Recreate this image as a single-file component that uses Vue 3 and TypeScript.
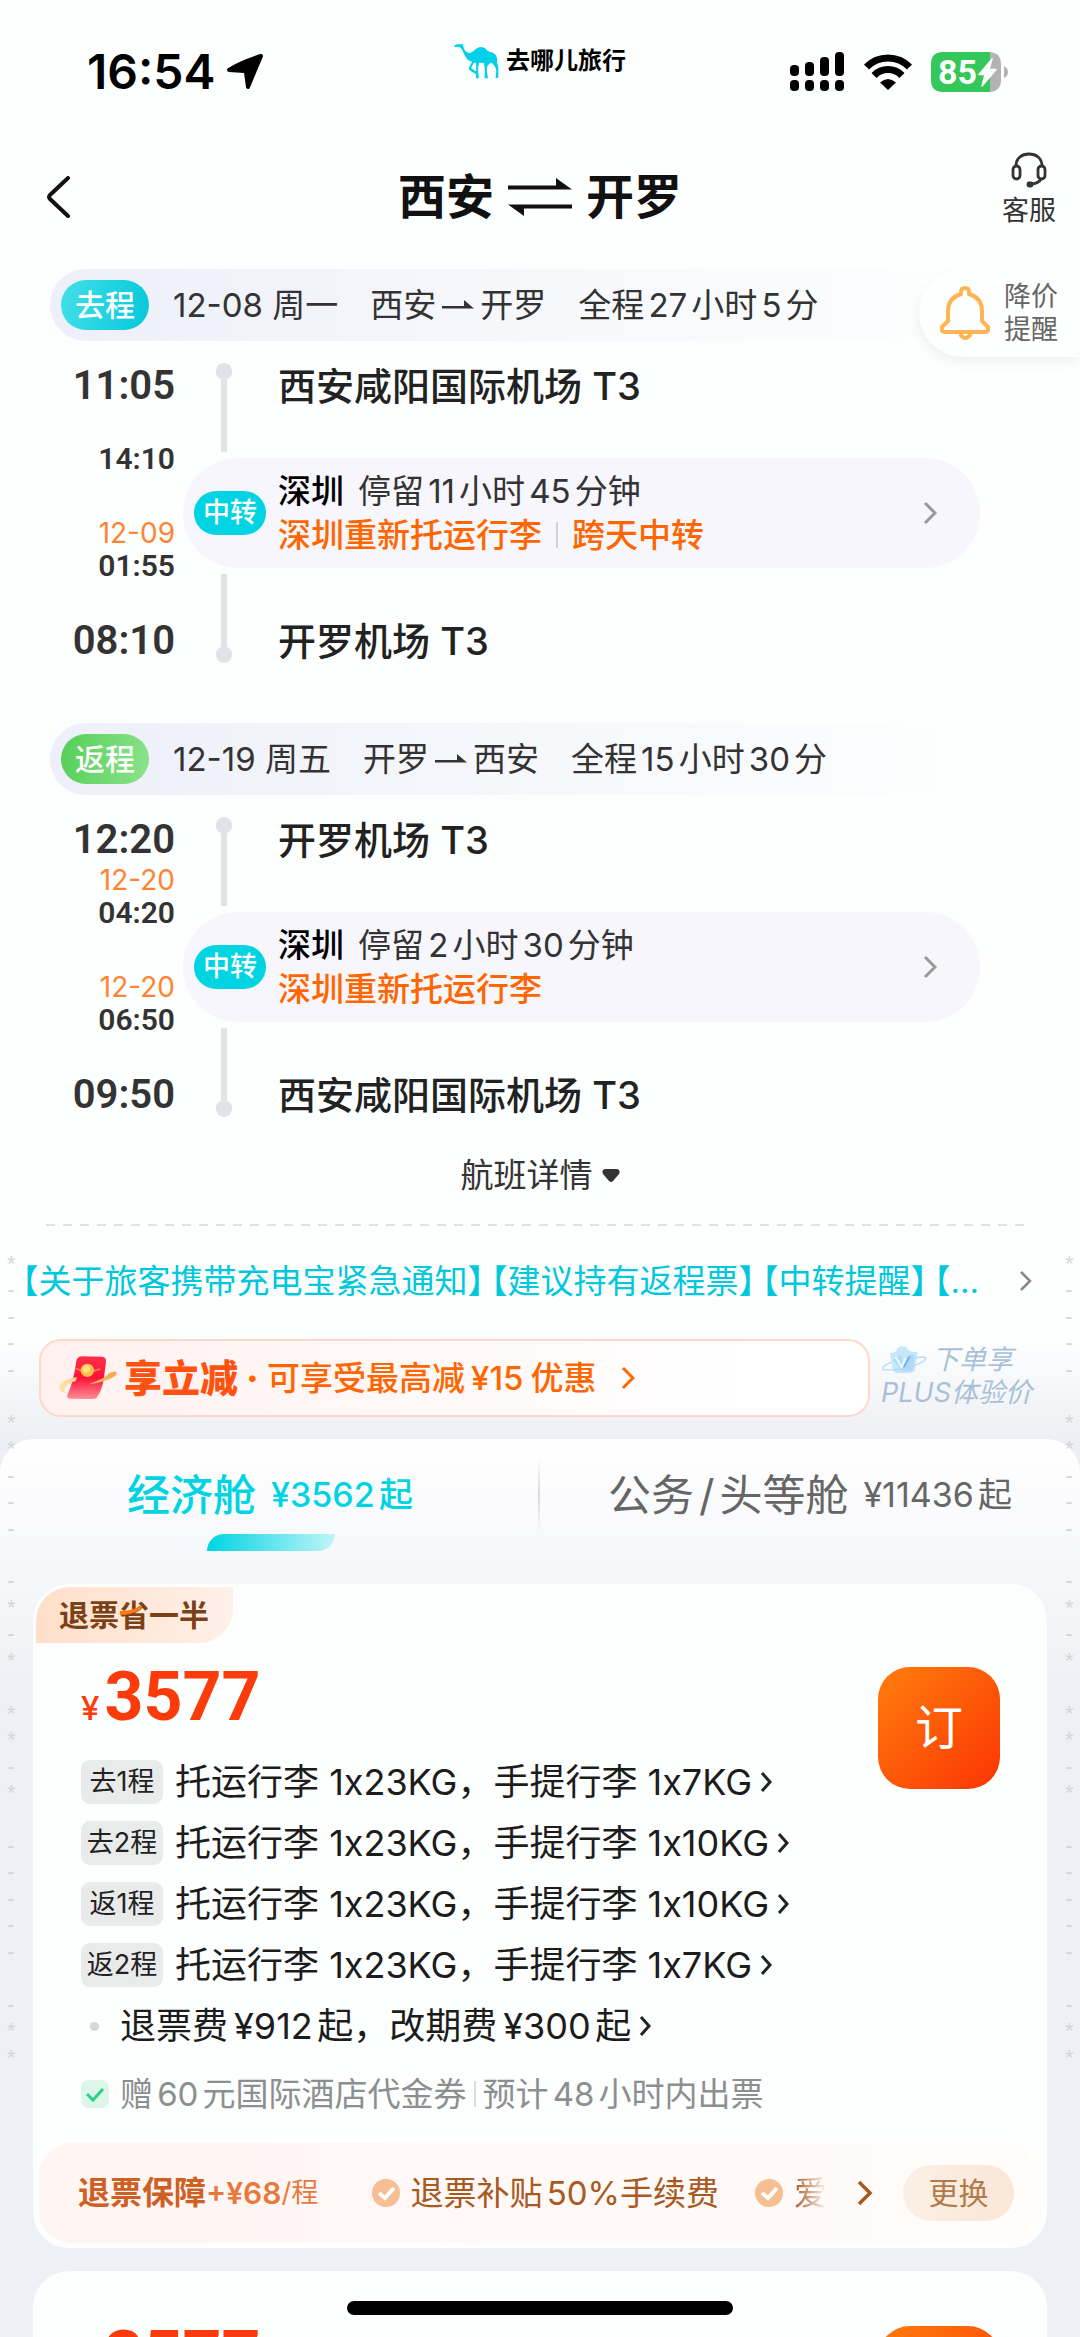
<script setup lang="ts">
interface Stop {
  time: string
  date?: string
}

interface Leg {
  kind: 'out' | 'back'
  label: string
  day: string
  from: string
  to: string
  total: string
  depart: Stop
  stopIn: Stop
  stopOut: Stop
  arrive: Stop
  origin: string
  target: string
  city: string
  stay: string
  notes: string[]
}

interface Fare {
  id: number
  tag?: string[]
  price: string
  bags: { leg: string; text: string }[]
  full: boolean
}

const legs: Leg[] = [
  {
    kind: 'out',
    label: '去程',
    day: '12-08 周一',
    from: '西安',
    to: '开罗',
    total: '全程27小时5分',
    depart: { time: '11:05' },
    stopIn: { time: '14:10' },
    stopOut: { time: '01:55', date: '12-09' },
    arrive: { time: '08:10' },
    origin: '西安咸阳国际机场 T3',
    target: '开罗机场 T3',
    city: '深圳',
    stay: '停留11小时45分钟',
    notes: ['深圳重新托运行李', '跨天中转'],
  },
  {
    kind: 'back',
    label: '返程',
    day: '12-19 周五',
    from: '开罗',
    to: '西安',
    total: '全程15小时30分',
    depart: { time: '12:20' },
    stopIn: { time: '04:20', date: '12-20' },
    stopOut: { time: '06:50', date: '12-20' },
    arrive: { time: '09:50' },
    origin: '开罗机场 T3',
    target: '西安咸阳国际机场 T3',
    city: '深圳',
    stay: '停留2小时30分钟',
    notes: ['深圳重新托运行李'],
  },
]

const notices = ['【关于旅客携带充电宝紧急通知】', '【建议持有返程票】', '【中转提醒】', '【...']

const fares: Fare[] = [
  {
    id: 1,
    tag: ['退票', '省', '一半'],
    price: '3577',
    bags: [
      { leg: '去1程', text: '托运行李 1x23KG，手提行李 1x7KG' },
      { leg: '去2程', text: '托运行李 1x23KG，手提行李 1x10KG' },
      { leg: '返1程', text: '托运行李 1x23KG，手提行李 1x10KG' },
      { leg: '返2程', text: '托运行李 1x23KG，手提行李 1x7KG' },
    ],
    full: true,
  },
  { id: 2, price: '3577', bags: [], full: false },
]

const edgeMarks = '*---- **--- -*-* **-* ----- -**'.split('')
</script>

<template>
  <div class="screen">
    <header class="status">
      <div class="clock">
        <span>16:54</span>
        <svg width="38" height="38" viewBox="0 0 38 38"><path d="M35 3L22 34L20 19.500Q20 18 18.500 18L3 17Q14 10 35 3Z" fill="#000" stroke="#000" stroke-width="4" stroke-linejoin="round" /></svg>
      </div>
      <div class="brand">
        <svg width="45" height="35" viewBox="46 41 134 104">
          <path fill="#00d0ea" d="M47 45L54 42H73L75 54Q82 67 93 68Q102 65 109 57Q118 50 128 50Q139 51 145 60Q150 64 160 66Q172 70 174 84Q173 98 178 109V141L170 143L172 122Q171 108 158 97Q150 98 145 108L144 122L147 143H137L138 120L135 97Q127 98 121 96Q117 108 118 122L120 143H111L112 132L92 118Q88 114 91 110L100 94L91 91Q83 85 78 75L70 58Q66 51 60 50H48ZM105 97L97 112L112 123V98Z" />
        </svg>
        <span>去哪儿旅行</span>
      </div>
      <div class="system">
        <svg width="56" height="40" viewBox="0 0 56 40">
          <rect x="1" y="13" width="9" height="11" rx="4" /><rect x="16" y="10" width="9" height="14" rx="4" /><rect x="31" y="5" width="9" height="19" rx="4" /><rect x="46" y="0" width="9" height="24" rx="4" />
          <rect x="1" y="28" width="9" height="11" rx="4" /><rect x="16" y="28" width="9" height="11" rx="4" /><rect x="31" y="28" width="9" height="11" rx="4" /><rect x="46" y="28" width="9" height="11" rx="4" />
        </svg>
        <svg width="48" height="36" viewBox="0 0 48 36">
          <path d="M2.500 13A30 30 0 0 1 45.500 13M10 21.500A19.500 19.500 0 0 1 38 21.500" fill="none" stroke="#000" stroke-width="7" />
          <path d="M16 28.500Q24 21.500 32 28.500L24 36Z" />
        </svg>
        <svg class="battery" width="77" height="40" viewBox="0 0 77 40">
          <path d="M12 0H59V40H12Q0 40 0 28V12Q0 0 12 0Z" fill="#34c759" />
          <path d="M59 0Q70 1 70 12V28Q70 39 59 40Z" fill="#b3b3b3" />
          <path d="M73 14Q77 16 77 20Q77 24 73 26Z" fill="#b3b3b3" />
          <path d="M61 7L48 22.500H54L51 34L65 17.500H58Z" fill="#fff" stroke="#fff" stroke-width="1.500" stroke-linejoin="round" />
          <text x="7" y="32" font-size="34" font-weight="700" fill="#fff">85</text>
        </svg>
      </div>
    </header>

    <nav class="nav">
      <button class="back" type="button" aria-label="返回">
        <svg width="24" height="42" viewBox="0 0 24 42"><path d="M22 2L4 19Q2 21 4 23L22 40" fill="none" stroke="#111" stroke-width="4" stroke-linecap="round" /></svg>
      </button>
      <h1 class="title">
        <span>西安</span>
        <svg width="64" height="38" viewBox="0 0 64 38"><path d="M0 7.500H48V0L64 11.500H0ZM64 30.500H16V38L0 26.500H64Z" fill="#111" /></svg>
        <span>开罗</span>
      </h1>
      <button class="service" type="button">
        <svg width="36" height="36" viewBox="0 0 36 36" fill="none" stroke="#333" stroke-width="2.800">
          <path d="M5 14C5 6 11 2 18 2S31 6 31 14" /><rect x="2" y="14" width="7" height="13" rx="3.500" /><rect x="27" y="14" width="7" height="13" rx="3.500" /><path d="M30 27Q28 31 21 32" /><rect x="17" y="31" width="4" height="3" rx="1" />
        </svg>
        <span>客服</span>
      </button>
    </nav>

    <button class="alert" type="button">
      <svg width="50" height="56" viewBox="0 0 50 56" fill="none" stroke="#ffb454" stroke-width="4">
        <path d="M21 9V7Q21 3 25 3T29 7V9Q42 13 42 26V36L48 42Q49 47 45 47H5Q1 47 2 42L8 36V26Q8 13 21 9Z" stroke-linejoin="round" /><path d="M20 49Q25 57 31 49" />
      </svg>
      <span>降价<br />提醒</span>
    </button>

    <main>
      <section v-for="leg in legs" :key="leg.kind" class="leg">
        <div class="band">
          <b class="badge" :class="leg.kind">{{ leg.label }}</b>
          <span>{{ leg.day }}</span>
          <span class="route">{{ leg.from }}<svg width="32" height="12" viewBox="0 0 32 12"><path d="M0 7H22V1L32 9.500H0Z" fill="#333" /></svg>{{ leg.to }}</span>
          <span>{{ leg.total }}</span>
        </div>
        <div class="leg-body">
          <div class="times">
            <time class="big">{{ leg.depart.time }}</time>
            <div class="mid">
              <span v-if="leg.stopIn.date" class="date">{{ leg.stopIn.date }}</span>
              <time class="small">{{ leg.stopIn.time }}</time>
            </div>
            <div class="mid out">
              <span v-if="leg.stopOut.date" class="date">{{ leg.stopOut.date }}</span>
              <time class="small">{{ leg.stopOut.time }}</time>
            </div>
            <time class="big">{{ leg.arrive.time }}</time>
          </div>
          <div class="stops">
            <div class="stop">
              <i class="rail"></i>
              <strong>{{ leg.origin }}</strong>
            </div>
            <button class="transfer" type="button">
              <b>中转</b>
              <span class="transfer-text">
                <span class="stay"><em>{{ leg.city }}</em>{{ leg.stay }}</span>
                <span class="notes"><span v-for="n in leg.notes" :key="n">{{ n }}</span></span>
              </span>
              <svg width="14" height="24" viewBox="0 0 14 24"><path d="M2 2L12 12L2 22" fill="none" stroke="#999" stroke-width="3" /></svg>
            </button>
            <div class="stop last">
              <i class="rail"></i>
              <strong>{{ leg.target }}</strong>
            </div>
          </div>
        </div>
      </section>

      <button class="more" type="button">
        航班详情<svg width="18" height="13" viewBox="0 0 18 13"><path d="M3 0H15Q19 1 17 5L11 12Q9 14 7 12L1 5Q-1 1 3 0Z" fill="#333" /></svg>
      </button>
      <div class="dashes"></div>

      <a class="notice" href="#notice">
        <span class="notice-text"><span v-for="n in notices" :key="n">{{ n }}</span></span>
        <svg width="13" height="22" viewBox="0 0 13 22"><path d="M2 2L11 11L2 20" fill="none" stroke="#888" stroke-width="2.500" /></svg>
      </a>

      <div class="promo">
        <button class="coupon" type="button">
          <svg width="60" height="46" viewBox="0 0 180 138">
            <defs>
              <linearGradient id="packet" x1="0" y1="0" x2="0" y2="1"><stop offset="0" stop-color="#ff2f4b" /><stop offset=".5" stop-color="#fb1238" /><stop offset="1" stop-color="#ff8f96" /></linearGradient>
              <linearGradient id="ring" x1="0" y1="0" x2="1" y2="0"><stop offset="0" stop-color="#ffe3a6" /><stop offset="1" stop-color="#f2a64a" /></linearGradient>
            </defs>
            <path d="M58 18Q60 4 76 4L136 5Q148 6 147 20L140 75Q134 108 119 128Q114 133 102 132L38 131Q27 130 32 118Q50 80 58 18Z" fill="url(#packet)" />
            <path d="M60 66Q4 76 7 100Q10 112 26 114Q14 100 35 87Q48 80 56 78ZM100 86Q152 66 156 54Q180 44 179 56Q170 74 98 88Z" fill="url(#ring)" />
            <path d="M56 40L90 54L130 42" fill="none" stroke="#ff8a5a" stroke-width="4" /><circle cx="91" cy="46" r="20" fill="#ffbd4a" /><circle cx="88" cy="42" r="11" fill="#ffe07c" />
          </svg>
          <b>享立减</b>
          <span class="dot">·</span>
          <span>可享受最高减<span class="yen">¥15</span>优惠</span>
          <svg width="14" height="24" viewBox="0 0 14 24"><path d="M2 2L12 12L2 22" fill="none" stroke="#ff6600" stroke-width="3" /></svg>
        </button>
        <div class="plus">
          <span class="plus-top">
            <svg width="46" height="30" viewBox="0 0 138 90">
              <path d="M26 24Q44 26 50 8L62 4L76 6Q84 24 110 20L102 76Q98 84 88 84H46Q38 84 36 76Z" fill="#c6e7fa" /><path d="M36 44L60 30L66 58L88 28L102 30L94 78L64 80Z" fill="#9fd2f5" opacity=".6" /><path d="M44 36L62 66L74 40" fill="none" stroke="#eaf8ff" stroke-width="7" /><path d="M68 68L86 34" fill="none" stroke="#6db4ea" stroke-width="6" />
              <path d="M30 52Q-2 66 8 74Q50 78 100 62Q142 44 132 38Q124 34 106 38" fill="none" stroke="#b5daf2" stroke-width="4" />
            </svg>
            下单享
          </span>
          <span>PLUS体验价</span>
        </div>
      </div>

      <div class="panel">
        <div class="tabs" role="tablist">
          <button class="tab on" type="button" role="tab" aria-selected="true">经济舱<small>¥3562起</small></button>
          <button class="tab" type="button" role="tab" aria-selected="false">公务<span class="slash">/</span>头等舱<small>¥11436起</small></button>
        </div>

        <article v-for="fare in fares" :key="fare.id" class="fare" :class="{ plain: !fare.tag }">
          <div v-if="fare.tag" class="fare-tag">
            {{ fare.tag[0] }}<span class="save">{{ fare.tag[1] }}<svg width="24" height="10" viewBox="0 0 24 10"><path d="M1 6Q12 6 22 1Q24 3 21 5Q12 10 1 10Z" fill="#ff7a0f" /></svg></span>{{ fare.tag[2] }}
          </div>
          <div class="fare-main">
            <div class="fare-info">
              <div class="price"><small>¥</small>{{ fare.price }}</div>
              <ul v-if="fare.full" class="rows">
                <li v-for="bag in fare.bags" :key="bag.leg">
                  <span class="leg-tag">{{ bag.leg }}</span>
                  <span>{{ bag.text }}</span>
                  <svg width="13" height="22" viewBox="0 0 13 22"><path d="M2 2L10 11L2 20" fill="none" stroke="#222" stroke-width="3" /></svg>
                </li>
                <li class="fees">
                  <i></i>
                  <span>退票费<span class="yen">¥912</span>起，改期费<span class="yen">¥300</span>起</span>
                  <svg width="13" height="22" viewBox="0 0 13 22"><path d="M2 2L10 11L2 20" fill="none" stroke="#222" stroke-width="3" /></svg>
                </li>
              </ul>
              <div v-if="fare.full" class="gift-line">
                <svg width="28" height="28" viewBox="0 0 28 28"><rect width="28" height="28" rx="8" fill="#dcf6ea" /><path d="M6 14L12 20L22 9" fill="none" stroke="#2fcf87" stroke-width="3" /></svg>
                <span>赠60元国际酒店代金券</span><i></i><span>预计48小时内出票</span>
              </div>
            </div>
            <button class="order" type="button">订</button>
          </div>
          <div v-if="fare.full" class="guard">
            <b>退票保障<span>+¥68</span></b><span class="per">/程</span>
            <span class="perk first"><svg width="28" height="28" viewBox="0 0 28 28"><circle cx="14" cy="14" r="14" fill="#f6bf93" /><path d="M7 14L13 19L22 9" fill="none" stroke="#fff" stroke-width="4" /></svg>退票补贴50%手续费</span>
            <span class="perk fade"><svg width="28" height="28" viewBox="0 0 28 28"><circle cx="14" cy="14" r="14" fill="#f6bf93" /><path d="M7 14L13 19L22 9" fill="none" stroke="#fff" stroke-width="4" /></svg><span>爱</span></span>
            <svg class="next" width="16" height="26" viewBox="0 0 16 26"><path d="M2 2L13 13L2 24" fill="none" stroke="#a8591f" stroke-width="3.500" /></svg>
            <button type="button">更换</button>
          </div>
        </article>
      </div>
    </main>

    <div class="edge left" aria-hidden="true"><span v-for="(m, i) in edgeMarks" :key="i">{{ m }}</span></div>
    <div class="edge right" aria-hidden="true"><span v-for="(m, i) in edgeMarks" :key="i">{{ m }}</span></div>
    <div class="home"></div>
  </div>
</template>

<style>
body {
  margin: 0;
  background: #eff0f5;
}
</style>

<style scoped>
.screen {
  position: relative;
  height: 100vh;
  overflow: hidden;
  background: #fdfefe;
  color: #333;
  font-family: Inter, "Noto Sans CJK SC", sans-serif;
  font-size: 33px;
  line-height: 44px;
  text-autospace: normal;
  white-space: nowrap;
}
.screen * {
  box-sizing: border-box;
}
svg {
  display: block;
  flex: none;
}
button {
  margin: 0;
  padding: 0;
  border: 0;
  background: none;
  color: inherit;
  font: inherit;
  white-space: nowrap;
  text-autospace: inherit;
}
.status {
  display: grid;
  grid-template-columns: 1fr auto 1fr;
  align-items: center;
  height: 144px;
  padding: 0 72px;
  color: #000;
}
.clock,
.system,
.brand {
  display: flex;
  align-items: center;
}
.clock {
  gap: 11px;
  padding-left: 15px;
  font-size: 48px;
  font-weight: 600;
}
.brand {
  gap: 7px;
  padding-bottom: 22px;
  font-size: 24px;
  font-weight: 700;
}
.system {
  justify-content: flex-end;
  gap: 19px;
}
.battery {
  font-family: Roboto, sans-serif;
}
.nav {
  display: grid;
  grid-template-columns: 1fr auto 1fr;
  align-items: center;
  height: 106px;
  margin-bottom: 19px;
  padding: 0 24px;
}
.back {
  justify-self: start;
  padding: 0 22px;
}
.title {
  display: flex;
  align-items: center;
  gap: 14px;
  margin: 0;
  color: #111;
  font-size: 48px;
  font-weight: 700;
}
.service {
  display: flex;
  flex-direction: column;
  align-items: center;
  justify-self: end;
  gap: 6px;
  padding-bottom: 16px;
  font-size: 27px;
  line-height: 33px;
}
.alert {
  position: absolute;
  top: 269px;
  right: 0;
  display: flex;
  align-items: center;
  gap: 14px;
  height: 88px;
  padding: 0 22px 0 21px;
  border-radius: 44px 0 0 44px;
  background: #fdfefe;
  box-shadow: -2px 6px 12px rgba(0, 0, 0, 0.05);
  color: #666;
  font-size: 27px;
  line-height: 33px;
}
.leg {
  margin-bottom: 57px;
}
.leg + .leg {
  margin-bottom: 33px;
}
.band {
  display: flex;
  align-items: center;
  gap: 32px;
  height: 72px;
  margin: 0 100px 0 50px;
  padding-left: 11px;
  border-radius: 36px 0 0 36px;
  background: linear-gradient(90deg, #edeffa, #f5f6fb 40%, #fdfefe);
}
.badge {
  width: 88px;
  margin-right: -8px;
  border-radius: 25px;
  color: #fff;
  font-size: 30px;
  font-weight: 500;
  line-height: 50px;
  text-align: center;
}
.badge.out {
  background: linear-gradient(100deg, #43dfe9, #06c8d9);
}
.badge.back {
  padding: 0;
  background: linear-gradient(100deg, #55cf57, #8ce38d);
}
.route {
  display: flex;
  align-items: center;
  gap: 6px;
}
.leg-body {
  display: flex;
  gap: 8px;
  padding-top: 20px;
}
.times {
  display: flex;
  flex-direction: column;
  width: 175px;
  text-align: right;
}
.big,
.small,
.price {
  font-family: Roboto, sans-serif;
  font-weight: 600;
}
.big {
  font-size: 40px;
  line-height: 50px;
}
.mid {
  display: flex;
  flex-direction: column;
  justify-content: flex-end;
  height: 66px;
}
.mid.out {
  margin: 41px 0 32px;
}
.small {
  font-size: 30px;
  line-height: 36px;
}
.date {
  color: #ff8432;
  font-size: 28px;
  line-height: 30px;
}
.stops {
  flex: 1;
}
.stop {
  display: flex;
  gap: 46px;
  height: 97px;
  padding-left: 33px;
}
.stop strong {
  color: #222;
  font-size: 38px;
  font-weight: 500;
  line-height: 50px;
}
.stop.last {
  height: 98px;
  align-items: flex-end;
}
.rail {
  width: 16px;
  height: 89px;
  margin-top: 2px;
  background:
    radial-gradient(circle at 8px 8px, #e1e4e6 8px, transparent 9px),
    linear-gradient(#e1e4e6, #e1e4e6) center / 6px 100% no-repeat;
  border-radius: 8px 8px 0 0;
}
.last .rail {
  margin: 0 0 3px;
  transform: rotate(180deg);
}
.transfer {
  display: flex;
  align-items: center;
  width: calc(100% - 100px);
  height: 110px;
  padding: 0 43px 0 11px;
  border-radius: 55px;
  background: #f6f6fc;
  text-align: left;
}
.transfer b {
  width: 72px;
  margin-right: 12px;
  border-radius: 22px;
  background: #00d4e3;
  color: #fff;
  font-size: 27px;
  font-weight: 500;
  text-align: center;
}
.transfer-text {
  display: flex;
  flex: 1;
  flex-direction: column;
}
.stay em {
  margin-right: 14px;
  color: #000;
  font-style: normal;
  font-weight: 500;
}
.notes {
  display: flex;
  align-items: center;
  color: #ff6600;
  font-weight: 500;
}
.notes span + span {
  display: flex;
  align-items: center;
}
.notes span + span::before {
  content: "";
  width: 2px;
  height: 26px;
  margin: 0 14px;
  background: #d0d0d8;
}
.more {
  display: flex;
  align-items: center;
  gap: 9px;
  margin: 0 auto 27px;
}
.dashes {
  height: 2px;
  margin: 0 50px 0 46px;
  background: repeating-linear-gradient(90deg, #dfe2e2 0 9px, transparent 9px 17px);
}
.notice {
  display: flex;
  align-items: center;
  justify-content: space-between;
  padding: 33px 48px 36px 22px;
  color: #00c8dc;
  text-decoration: none;
}
.notice-text {
  display: flex;
  gap: 7px;
  font-feature-settings: "halt";
}
.promo {
  display: flex;
  gap: 11px;
  height: 138px;
  margin-bottom: -38px;
  padding: 0 48px 0 39px;
  background: linear-gradient(#fdfefe, #eeeff4 100px);
}
.coupon {
  display: flex;
  flex: 1;
  align-items: center;
  height: 78px;
  padding-left: 16px;
  border: 2px solid #ffd8ca;
  border-radius: 22px;
  background: linear-gradient(90deg, #fff1f0, #fff 85%);
  color: #ff6600;
  font-weight: 500;
}
.coupon b {
  margin-left: 7px;
  color: #ff5210;
  font-size: 38px;
  font-weight: 900;
}
.dot {
  width: 29px;
  font-weight: 900;
  text-align: center;
}
.coupon > svg:last-child {
  margin-left: 24px;
}
.yen {
  margin-left: 6px;
}
.coupon .yen {
  margin-right: 3px;
}
.plus {
  display: flex;
  flex-direction: column;
  padding-top: 4px;
  color: #a9c1d8;
  font-size: 27px;
  font-style: italic;
  line-height: 33px;
  text-autospace: no-autospace;
}
.plus-top {
  display: flex;
  align-items: center;
  gap: 5px;
}
.panel {
  position: relative;
  border-radius: 34px 34px 0 0;
  background: linear-gradient(#fff, #f7f8fb 110px, #eff0f5 260px);
}
.tabs {
  display: flex;
  height: 145px;
}
.tab {
  position: relative;
  display: flex;
  flex: 1;
  align-items: center;
  justify-content: center;
  height: 112px;
  color: #666;
  font-size: 43px;
}
.tab small {
  margin-left: 15px;
  font-size: 34px;
}
.slash {
  margin: 0 5px;
}
.tab.on {
  color: #00d4e3;
  font-weight: 500;
}
.tab.on::before {
  content: "";
  position: absolute;
  bottom: 0;
  left: calc(50% - 63px);
  width: 128px;
  height: 17px;
  border-radius: 17px 0;
  background: linear-gradient(90deg, #00d4e3, #c0f5f8);
}
.tab + .tab::before {
  content: "";
  position: absolute;
  top: 19px;
  left: -2px;
  width: 2px;
  height: 75px;
  background: linear-gradient(transparent, #d8d9dc, transparent);
}
.fare {
  margin: 0 33px 23px;
  padding-top: 3px;
  padding-bottom: 5px;
  border-radius: 36px;
  background: #fdfefe;
}
.fare.plain {
  min-height: 400px;
}
.fare-tag {
  width: 197px;
  height: 56px;
  margin-left: 3px;
  padding-left: 23px;
  border-radius: 34px 0;
  background: linear-gradient(90deg, #ffdfca, #fff0e8);
  color: #7a4119;
  font-size: 30px;
  font-weight: 700;
  line-height: 56px;
}
.save {
  position: relative;
}
.save svg {
  position: absolute;
  top: 8px;
  left: 0;
}
.fare-main {
  display: flex;
  align-items: flex-start;
  justify-content: space-between;
  padding: 24px 47px 0 48px;
}
.plain .fare-main {
  padding-top: 52px;
}
.price {
  display: flex;
  align-items: baseline;
  height: 60px;
  color: #fb3c0a;
  font-size: 68px;
  font-weight: 700;
  line-height: 60px;
}
.price small {
  margin-right: 5px;
  font-family: Inter, sans-serif;
  font-size: 33px;
  font-weight: 500;
}
.rows {
  display: flex;
  flex-direction: column;
  gap: 17px;
  margin: 33px 0 24px;
  padding: 0;
  color: #1c1c1c;
  font-size: 36px;
  list-style: none;
}
.rows li {
  display: flex;
  align-items: center;
}
.rows svg {
  margin-left: 8px;
}
.leg-tag {
  width: 82px;
  margin-right: 12px;
  border-radius: 9px;
  background: #e9ebeb;
  color: #222;
  font-size: 27px;
  text-align: center;
  text-autospace: no-autospace;
}
.fees i {
  width: 9px;
  height: 9px;
  margin: 0 21px 0 9px;
  border-radius: 50%;
  background: #d5d8d8;
}
.gift-line {
  display: flex;
  align-items: center;
  color: #8c8f8f;
}
.gift-line svg {
  margin-right: 11px;
}
.gift-line i {
  width: 2px;
  height: 26px;
  margin: 0 7px;
  background: #dcdcdc;
}
.order {
  width: 122px;
  height: 122px;
  border-radius: 32px;
  background: linear-gradient(135deg, #ff7d0c, #fb3505);
  color: #fff;
  font-size: 48px;
}
.guard {
  display: flex;
  align-items: center;
  height: 100px;
  margin: 27px 6px 0;
  padding: 0 27px 0 39px;
  border-radius: 32px;
  background: linear-gradient(90deg, #fff5f3, #fffcfa);
  color: #a8591f;
}
.guard b {
  color: #cf6024;
  font-size: 32px;
}
.guard b span {
  color: #e8793c;
  font-size: 30px;
  font-weight: 600;
}
.per {
  color: #e8793c;
  font-size: 27px;
}
.perk {
  display: flex;
  align-items: center;
  gap: 11px;
  margin-left: 36px;
}
.perk.first {
  margin-left: auto;
}
.fade span {
  background: linear-gradient(90deg, #a8591f, #fffaf8);
  background-clip: text;
  color: transparent;
}
.next {
  margin: 0 30px;
}
.guard button {
  width: 111px;
  height: 56px;
  border-radius: 28px;
  background: linear-gradient(90deg, #fbefe5, #fae7d7);
  color: #b17a48;
  font-size: 30px;
}
.edge {
  position: absolute;
  top: 1251px;
  display: flex;
  flex-direction: column;
  width: 8px;
  height: 820px;
  color: #d3d6d8;
  font-family: "Liberation Sans", sans-serif;
  font-size: 22px;
  line-height: 26px;
  text-align: center;
}
.edge span {
  flex: 1;
}
.left {
  left: 7px;
}
.right {
  right: 7px;
}
.home {
  position: absolute;
  bottom: 22px;
  left: 50%;
  width: 386px;
  height: 14px;
  margin-left: -193px;
  border-radius: 7px;
  background: #000;
}
</style>
